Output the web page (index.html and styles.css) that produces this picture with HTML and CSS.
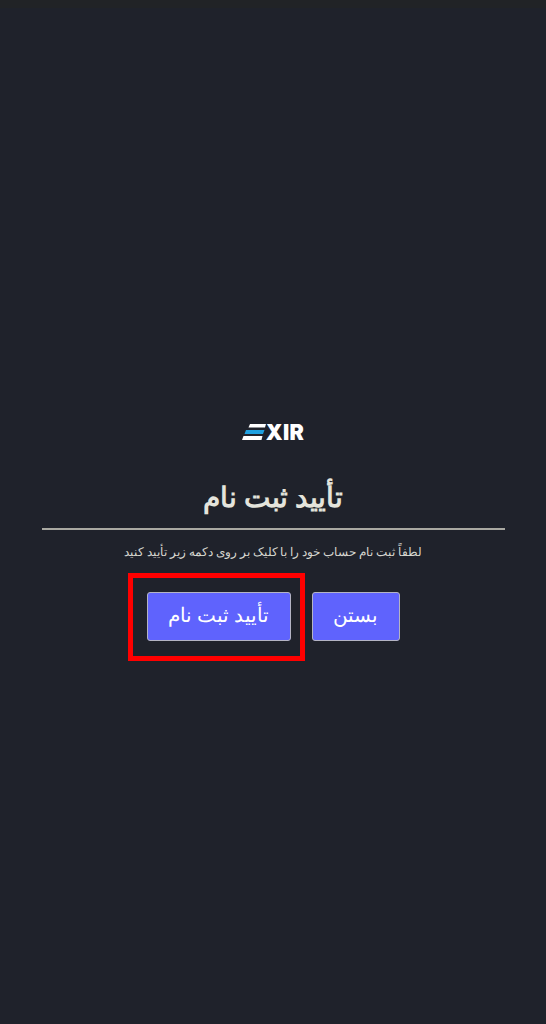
FILE: index.html
```html
<!DOCTYPE html>
<html lang="fa" dir="rtl">
<head>
  <meta charset="UTF-8" />
  <meta name="viewport" content="width=device-width, initial-scale=1.0"/>
  <title>تأیید ثبت نام</title>
  <link rel="stylesheet" href="styles.css">
</head>
<body>
  <div class="barra"></div>

  <div class="contenido">
    <div class="logo" dir="ltr">
      <svg class="logo-e" width="24" height="16" viewBox="0 0 24 16">
        <polygon points="8,0 24,0 23,3.5 6.5,3.5" fill="#ffffff"/>
        <polygon points="4,6 22.5,6 21,10 2.5,10" fill="#1ea0e0"/>
        <polygon points="1.5,12 20.5,12 19.5,16 0,16" fill="#ffffff"/>
      </svg>
      <span class="logo-texto">XIR</span>
    </div>

    <h1 class="titulo">تأیید ثبت نام</h1>
    <div class="linea"></div>
    <p class="descripcion">لطفاً ثبت نام حساب خود را با کلیک بر روی دکمه زیر تأیید کنید</p>

    <div class="botones" dir="ltr">
      <div class="boton-marcado">
        <button class="boton boton-confirmar">تأیید ثبت نام</button>
        <div class="marco"></div>
      </div>
      <button class="boton boton-cerrar">بستن</button>
    </div>
  </div>
</body>
</html>
```

FILE: styles.css
```css
body {
  margin: 0;
  height: 1024px;
  overflow: hidden;
  background-color: #1f222b;
  font-family: 'Noto Sans', sans-serif;
  color: #e4e4dc;
}

.barra {
  height: 8px;
  background-color: #212326;
}

.contenido {
  display: flex;
  flex-direction: column;
  align-items: center;
  padding: 410px 41px 0;
}

.logo {
  display: flex;
  align-items: flex-end;
  height: 22px;
  color: #ffffff;
}

.logo-texto {
  font-family: 'Inter', sans-serif;
  font-weight: 900;
  font-size: 21.5px;
  line-height: 16px;
  letter-spacing: 0.3px;
}

.titulo {
  margin: 36px 0 0;
  font-size: 28px;
  line-height: 40px;
  font-weight: 700;
  color: #e4e4dc;
}

.linea {
  width: 463px;
  height: 2px;
  margin-top: 12px;
  background-color: #a9a9a2;
}

.descripcion {
  margin: 13px 0 0;
  font-size: 11.5px;
  line-height: 18px;
  color: #d6d6d0;
}

.botones {
  display: flex;
  gap: 21px;
  margin-top: 31px;
}

.boton-marcado {
  position: relative;
}

.boton {
  display: block;
  height: 49px;
  background-color: #5f63fd;
  border: 1px solid #b4b4c4;
  border-radius: 3px;
  color: #ffffff;
  font-family: 'Noto Sans', sans-serif;
  font-size: 20px;
  padding: 0 0 5px;
}

.boton-confirmar {
  width: 144px;
}

.boton-cerrar {
  width: 88px;
}

.marco {
  position: absolute;
  top: -19px;
  left: -19px;
  right: -14px;
  bottom: -20px;
  border: 5px solid #ff0000;
}
```
